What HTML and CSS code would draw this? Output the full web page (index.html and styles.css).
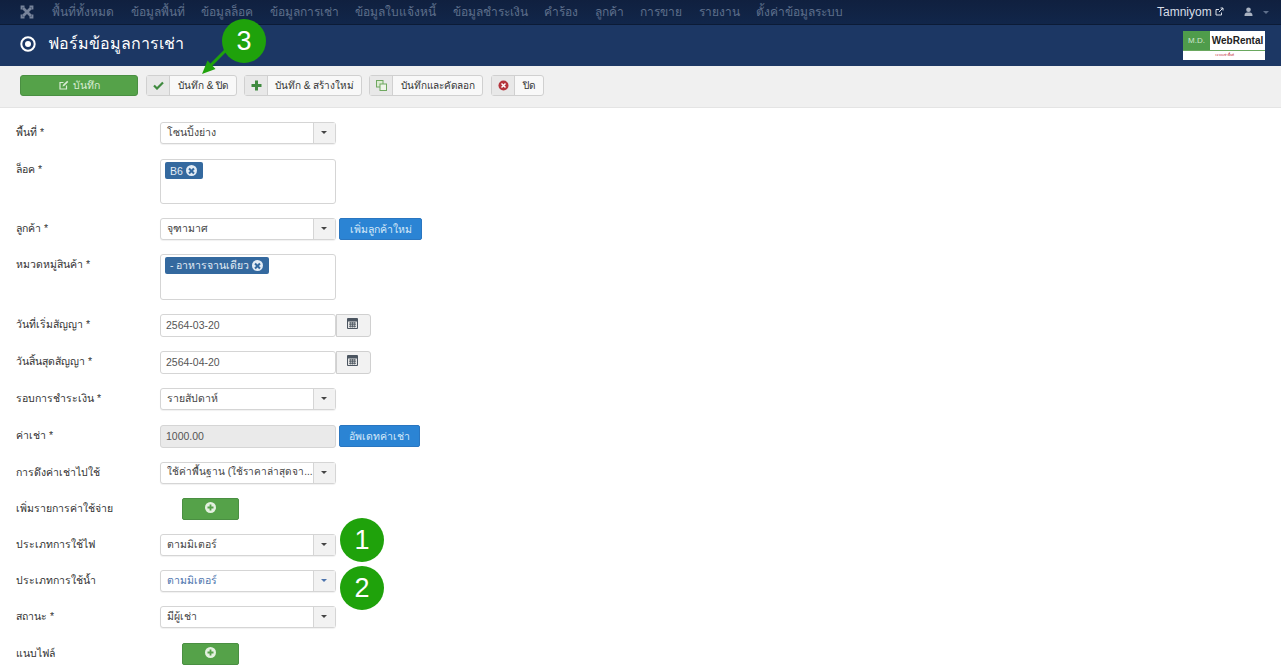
FILE: index.html
```html
<!DOCTYPE html>
<html lang="th">
<head>
<meta charset="utf-8">
<title>ฟอร์มข้อมูลการเช่า</title>
<link rel="stylesheet" href="styles.css">
</head>
<body>
<nav class="navbar">
  <svg class="joomla" width="16" height="16" viewBox="0 0 16 16"><path d="M4 4 L12 12 M12 4 L4 12" stroke="#77839a" stroke-width="2.800" fill="none"/><path d="M2.500 5.500V2.500h3M10.500 2.500h3v3M13.500 10.500v3h-3M5.500 13.500h-3v-3" stroke="#77839a" stroke-width="1.800" fill="none"/></svg>
  <ul class="menu">
    <li>พื้นที่ทั้งหมด</li><li>ข้อมูลพื้นที่</li><li>ข้อมูลล็อค</li><li>ข้อมูลการเช่า</li><li>ข้อมูลใบแจ้งหนี้</li><li>ข้อมูลชำระเงิน</li><li>คำร้อง</li><li>ลูกค้า</li><li>การขาย</li><li>รายงาน</li><li>ตั้งค่าข้อมูลระบบ</li>
  </ul>
  <div class="nav-right">
    <span class="site">Tamniyom
      <svg width="9" height="9" viewBox="0 0 9 9"><path d="M6.500 5.500V8H1V2.500h3M4 5l4-4M5.500 1H8v2.500" fill="none" stroke="#d8dde6" stroke-width="1"/></svg>
    </span>
    <svg width="9" height="10" viewBox="0 0 9 10"><circle cx="4.500" cy="2.800" r="2.300" fill="#aab3c2"/><path d="M0.500 9 C0.500 6 2 5.600 4.500 5.600 S8.500 6 8.500 9Z" fill="#aab3c2"/></svg>
    <span class="nav-caret"></span>
  </div>
</nav>
<header class="titlebar">
  <svg class="target" width="16" height="16" viewBox="0 0 16 16"><circle cx="8" cy="8" r="6.700" fill="none" stroke="#fff" stroke-width="2"/><circle cx="8" cy="8" r="3" fill="#fff"/></svg>
  <h1>ฟอร์มข้อมูลการเช่า</h1>
  <div class="logo">
    <div class="logo-top"><span class="logo-md">M.D.</span><span class="logo-web">WebRental</span></div>
    <div class="logo-sub">ระบบเช่าพื้นที่</div>
  </div>
</header>
<div class="toolbar">
  <button class="btn-save">
    <svg width="10" height="10" viewBox="0 0 10 10"><path d="M7.500 5.500V9H1V2.500h3.500" fill="none" stroke="#d9ecd4" stroke-width="1.200"/><path d="M3.500 6.500 4 4.800 8.200 0.800 9.300 1.900 5.200 6Z" fill="#d9ecd4"/></svg>
    บันทึก
  </button>
  <div class="tbtn w91">
    <span class="tico"><svg width="11" height="9" viewBox="0 0 11 9"><path d="M1 4.500 4 7.500 10 1.500" fill="none" stroke="#3f8a3f" stroke-width="2.200"/></svg></span>
    <span class="tlabel">บันทึก &amp; ปิด</span>
  </div>
  <div class="tbtn w118">
    <span class="tico"><svg width="11" height="11" viewBox="0 0 11 11"><path d="M5.500 0.500v10M0.500 5.500h10" stroke="#3f8a3f" stroke-width="3"/></svg></span>
    <span class="tlabel">บันทึก &amp; สร้างใหม่</span>
  </div>
  <div class="tbtn w114">
    <span class="tico"><svg width="11" height="11" viewBox="0 0 11 11"><rect x="0.500" y="0.500" width="6.500" height="6.500" fill="#dcebd2" stroke="#6fa860"/><rect x="4" y="4" width="6.500" height="6.500" fill="#eef5e8" stroke="#6fa860"/></svg></span>
    <span class="tlabel">บันทึกและคัดลอก</span>
  </div>
  <div class="tbtn w53">
    <span class="tico"><svg width="11" height="11" viewBox="0 0 11 11"><circle cx="5.500" cy="5.500" r="5" fill="#b5343c"/><path d="M3.500 3.500l4 4M7.500 3.500l-4 4" stroke="#fff" stroke-width="1.500"/></svg></span>
    <span class="tlabel">ปิด</span>
  </div>
</div>
<main class="form">
  <div class="row"><label>พื้นที่ *</label><div class="select"><span class="sval">โซนปิ้งย่าง</span><span class="sarrow"></span></div></div>
  <div class="row"><label>ล็อค *</label><div class="multi m45"><span class="tag">B6 <i class="x"></i></span></div></div>
  <div class="row"><label>ลูกค้า *</label><div class="select"><span class="sval">จุฑามาศ</span><span class="sarrow"></span></div><button class="btn-blue">เพิ่มลูกค้าใหม่</button></div>
  <div class="row"><label>หมวดหมู่สินค้า *</label><div class="multi m46"><span class="tag">- อาหารจานเดียว <i class="x"></i></span></div></div>
  <div class="row"><label>วันที่เริ่มสัญญา *</label><div class="date"><span class="input">2564-03-20</span><span class="cal"><svg width="11" height="11" viewBox="0 0 11 11"><rect width="11" height="11" rx="1" fill="#4b5560"/><path d="M1 3.500h9v6.500H1z" fill="#e6e6e6"/><path d="M2 5h7M2 6.700h7M2 8.400h7M3.700 4v5.500M5.500 4v5.500M7.300 4v5.500" stroke="#4b5560" stroke-width=".8"/></svg></span></div></div>
  <div class="row"><label>วันสิ้นสุดสัญญา *</label><div class="date"><span class="input">2564-04-20</span><span class="cal"><svg width="11" height="11" viewBox="0 0 11 11"><rect width="11" height="11" rx="1" fill="#4b5560"/><path d="M1 3.500h9v6.500H1z" fill="#e6e6e6"/><path d="M2 5h7M2 6.700h7M2 8.400h7M3.700 4v5.500M5.500 4v5.500M7.300 4v5.500" stroke="#4b5560" stroke-width=".8"/></svg></span></div></div>
  <div class="row r-wide"><label>รอบการชำระเงิน *</label><div class="select"><span class="sval">รายสัปดาห์</span><span class="sarrow"></span></div></div>
  <div class="row"><label>ค่าเช่า *</label><span class="input disabled">1000.00</span><button class="btn-blue btn-blue-b">อัพเดทค่าเช่า</button></div>
  <div class="row"><label>การดึงค่าเช่าไปใช้</label><div class="select"><span class="sval sval-long">ใช้ค่าพื้นฐาน (ใช้ราคาล่าสุดจา...</span><span class="sarrow"></span></div></div>
  <div class="row"><label>เพิ่มรายการค่าใช้จ่าย</label><button class="btn-add"><svg width="11" height="11" viewBox="0 0 11 11"><circle cx="5.500" cy="5.500" r="5.500" fill="#e4f1e0"/><path d="M5.500 2.500v6M2.500 5.500h6" stroke="#55a249" stroke-width="1.800"/></svg></button></div>
  <div class="row"><label>ประเภทการใช้ไฟ</label><div class="select"><span class="sval">ตามมิเตอร์</span><span class="sarrow"></span></div></div>
  <div class="row"><label>ประเภทการใช้น้ำ</label><div class="select"><span class="sval blue">ตามมิเตอร์</span><span class="sarrow sarrow-blue"></span></div></div>
  <div class="row r-wide"><label>สถานะ *</label><div class="select"><span class="sval">มีผู้เช่า</span><span class="sarrow"></span></div></div>
  <div class="row"><label>แนบไฟล์</label><button class="btn-add"><svg width="11" height="11" viewBox="0 0 11 11"><circle cx="5.500" cy="5.500" r="5.500" fill="#e4f1e0"/><path d="M5.500 2.500v6M2.500 5.500h6" stroke="#55a249" stroke-width="1.800"/></svg></button></div>
</main>
<span class="badge b1">1</span>
<span class="badge b2">2</span>
<span class="badge b3">3</span>
<svg class="arrow" width="30" height="30" viewBox="0 0 30 30"><path d="M26 3 10 19" stroke="#1fa20b" stroke-width="3"/><path d="M2 27 7.500 13.500 15.500 22Z" fill="#1fa20b"/></svg>
</body>
</html>
```
FILE: styles.css
```css
* { box-sizing: border-box; }
html, body { margin: 0; height: 668px; overflow: hidden; }
body { position: relative; background: #fff; color: #333; font-family: "Liberation Sans", sans-serif; font-size: 10.500px; }

.navbar { height: 25px; background: linear-gradient(#10203f, #11264a); border-bottom: 1px solid #0c1b36; display: flex; align-items: center; padding-left: 19px; }
.joomla { flex: none; }
.menu { list-style: none; display: flex; gap: 16.500px; margin: 0 0 2px 17px; padding: 0; font-size: 12px; color: #5e6f8b; white-space: nowrap; }
.nav-right { margin-left: auto; display: flex; align-items: center; padding-right: 12px; color: #d8dde6; font-size: 12px; }
.site { margin-right: 20px; }
.nav-caret { margin-left: 10px; border: 3px solid transparent; border-top-color: #5e6f8b; border-bottom: 0; }

.titlebar { height: 41px; background: #1c3764; display: flex; align-items: center; padding: 0 16px 0 20px; color: #fff; }
.target { margin-bottom: 4px; }
.titlebar h1 { margin: 0 0 3px 12px; font-size: 16px; font-weight: 400; line-height: 1; }
.logo { margin-left: auto; width: 82px; height: 29px; background: #fff; display: flex; flex-direction: column; }
.logo-top { height: 20px; display: flex; border-bottom: 1px solid #6aa85f; }
.logo-md { width: 27px; background: #4f9c4b; color: #cfe6cb; font-size: 8px; line-height: 20px; text-align: center; }
.logo-web { flex: 1; color: #222; font-size: 10px; font-weight: 700; line-height: 20px; text-align: center; white-space: nowrap; }
.logo-sub { color: #c0262d; font-size: 3px; line-height: 8px; text-align: center; }

.toolbar { height: 42px; background: #f0f0f0; border-bottom: 1px solid #e4e4e4; display: flex; align-items: center; padding: 0 0 3px 20px; gap: 7px; }
.btn-save { width: 118px; height: 21px; margin-right: 1px; border: 1px solid #4a8f42; border-radius: 3px; background: #55a249; color: #d9ecd4; font: inherit; display: flex; align-items: center; justify-content: center; gap: 4px; padding: 0; }
.tbtn { height: 21px; display: flex; border: 1px solid #d0d0d0; border-radius: 3px; background: #f8f8f8; }
.w91 { width: 91px; }
.w118 { width: 118px; }
.w114 { width: 114px; }
.w53 { width: 53px; margin-left: 1px; }
.tico { width: 23px; flex: none; background: #e8e8e8; border-right: 1px solid #d0d0d0; display: flex; align-items: center; justify-content: center; }
.tlabel { flex: 1; text-align: center; line-height: 19px; font-size: 10px; color: #333; white-space: nowrap; }

.form { padding: 14px 0 0 16px; }
.row { display: flex; align-items: flex-start; margin-bottom: 14px; min-height: 22px; }
.row:first-child { margin-bottom: 15px; }
.row.r-wide { margin-bottom: 15px; }
.row label { width: 144px; flex: none; font-size: 10.500px; line-height: 20px; color: #333; }

.select { width: 176px; height: 22px; display: flex; border: 1px solid #d5d5d5; border-radius: 3px; background: #fff; box-shadow: 0 1px 1px rgba(0,0,0,.06); }
.sval { flex: 1; min-width: 0; padding-left: 6px; line-height: 18px; font-size: 10.500px; color: #444; white-space: nowrap; overflow: hidden; }
.sval-long { font-size: 10.100px; }
.sval.blue { color: #4d74ad; }
.sarrow { width: 22px; flex: none; background: #f2f2f2; border-left: 1px solid #d5d5d5; position: relative; }
.sarrow::after { content: ""; position: absolute; left: 7px; top: 8px; border: 3px solid transparent; border-top-color: #444; border-bottom: 0; }
.sarrow-blue::after { border-top-color: #4d74ad; }

.multi { width: 176px; border: 1px solid #d5d5d5; border-radius: 3px; background: #fff; padding: 2px 4px; }
.m45 { height: 45px; }
.m46 { height: 46px; }
.tag { display: inline-flex; align-items: center; gap: 3px; height: 17px; padding: 0 6px 0 5px; border-radius: 2px; background: #34699f; color: #e3ecf5; font-size: 10.500px; white-space: nowrap; }
.x { width: 11px; height: 11px; border-radius: 50%; background: #e3ecf5; position: relative; }
.x::before, .x::after { content: ""; position: absolute; left: 2px; top: 4.500px; width: 7px; height: 2px; background: #34699f; transform: rotate(45deg); }
.x::after { transform: rotate(-45deg); }

.date { display: flex; height: 23px; }
.input { width: 176px; height: 23px; border: 1px solid #d5d5d5; border-radius: 3px; background: #fff; padding-left: 5px; line-height: 21px; font-size: 10.500px; color: #555; }
.input.disabled { background: #eaeaea; }
.cal { width: 35px; height: 23px; border: 1px solid #d0d0d0; border-radius: 0 3px 3px 0; background: #f2f2f2; display: flex; justify-content: center; padding: 3px 3px 0 0; }

.btn-blue { width: 83px; height: 22px; margin-left: 3px; padding: 0; border: 1px solid #2a76c0; border-radius: 2px; background: #2b84d4; color: #d5e8f8; font: inherit; white-space: nowrap; }
.btn-blue-b { width: 81px; }
.btn-add { width: 57px; height: 22px; margin-left: 22px; padding: 0 0 4px; border: 1px solid #4a8f42; border-radius: 2px; background: #55a249; display: flex; align-items: center; justify-content: center; }

.badge { position: absolute; width: 44px; height: 44px; border-radius: 50%; background: #1fa20b; color: #fff; font-size: 27px; line-height: 44px; text-align: center; }
.b1 { left: 340px; top: 518px; }
.b2 { left: 340px; top: 566px; }
.b3 { left: 222px; top: 19px; }
.arrow { position: absolute; left: 200px; top: 47px; }
```
